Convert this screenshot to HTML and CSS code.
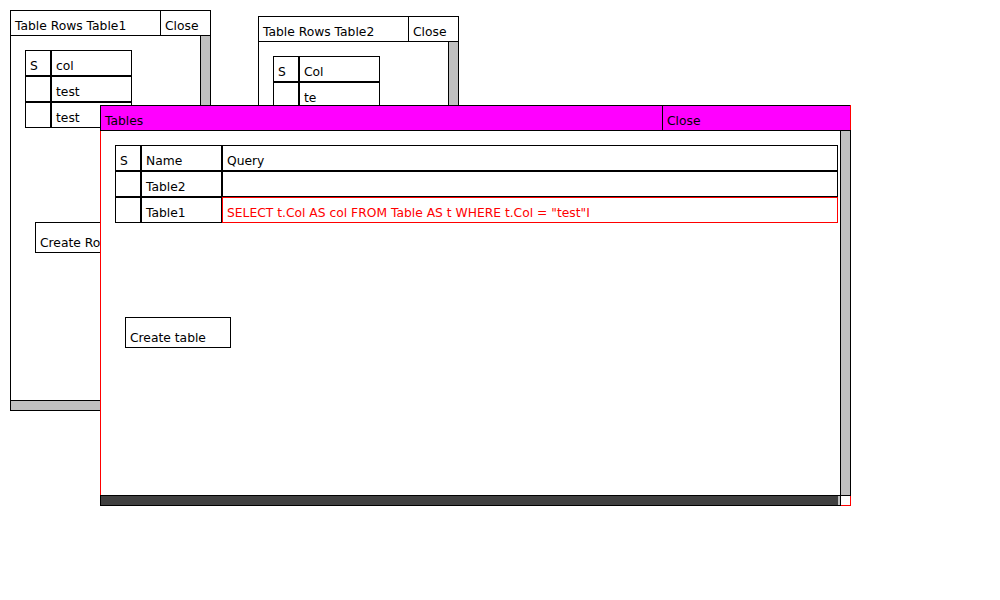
FILE: index.html
```html
<!DOCTYPE html>
<html>
<head>
<meta charset="utf-8">
<link rel="stylesheet" href="styles.css">
</head>
<body>
<div class="desktop">
  <div class="win win-narrow win-rows1">
    <div class="titlebar">
      <div class="title">Table Rows Table1</div>
      <div class="close">Close</div>
    </div>
    <div class="body">
      <div class="grid grid-rows">
        <div class="cell">S</div><div class="cell">col</div>
        <div class="cell"></div><div class="cell">test</div>
        <div class="cell"></div><div class="cell">test</div>
      </div>
      <div class="btn">Create Row</div>
    </div>
    <div class="vscroll"></div>
    <div class="hscroll"></div>
  </div>

  <div class="win win-narrow win-rows2">
    <div class="titlebar">
      <div class="title">Table Rows Table2</div>
      <div class="close">Close</div>
    </div>
    <div class="body">
      <div class="grid grid-rows">
        <div class="cell">S</div><div class="cell">Col</div>
        <div class="cell"></div><div class="cell">te</div>
      </div>
    </div>
    <div class="vscroll"></div>
    <div class="hscroll"></div>
  </div>

  <div class="win win-wide win-active win-tables">
    <div class="titlebar">
      <div class="title">Tables</div>
      <div class="close">Close</div>
    </div>
    <div class="body">
      <div class="grid grid-tables">
        <div class="cell">S</div><div class="cell">Name</div><div class="cell">Query</div>
        <div class="cell"></div><div class="cell">Table2</div><div class="cell"></div>
        <div class="cell"></div><div class="cell">Table1</div><div class="cell cell-edit">SELECT t.Col AS col FROM Table AS t WHERE t.Col = "test"I</div>
      </div>
      <div class="btn">Create table</div>
    </div>
    <div class="vscroll"></div>
    <div class="hscroll"><div class="thumb"></div></div>
  </div>
</div>
</body>
</html>
```

FILE: styles.css
```css
* { box-sizing: border-box; }

html, body {
  margin: 0;
  padding: 0;
  background: #ffffff;
}

body {
  font-family: "DejaVu Sans", "Liberation Sans", sans-serif;
  font-size: 12.3px;
  line-height: 14px;
  color: #000000;
}

.desktop {
  position: relative;
  width: 1000px;
  height: 600px;
  overflow: hidden;
}

.win {
  position: absolute;
  width: 201px;
  height: 401px;
  border: 1px solid #000000;
  background: #ffffff;
  display: flex;
  flex-direction: column;
}

.win-wide { width: 751px; }
.win-active { border-color: #ff0000; }

.win-rows1 { left: 10px; top: 10px; }
.win-rows2 { left: 258px; top: 16px; }
.win-tables { left: 100px; top: 105px; }

.titlebar {
  display: flex;
  height: 26px;
  margin: -1px 0 0 -1px;
  border: 1px solid #000000;
  border-right: none;
  flex-shrink: 0;
}

.win-narrow .titlebar { margin-right: -1px; border-right: 1px solid #000000; }
.win-active .titlebar { background: #ff00ff; }

.title {
  flex: 1;
  display: flex;
  align-items: flex-end;
  padding: 0 0 2px 4px;
  white-space: nowrap;
  overflow: hidden;
}

.close {
  display: flex;
  align-items: flex-end;
  padding: 0 0 2px 4px;
  border-left: 1px solid #000000;
  white-space: nowrap;
}

.win-narrow .close { width: 50px; }
.win-wide .close { width: 188px; }

.body {
  padding: 14px 0 0 14px;
  display: flex;
  flex-direction: column;
  align-items: flex-start;
}

.grid {
  display: grid;
  grid-auto-rows: 26px;
}

.grid-rows { grid-template-columns: 26px 81px; }
.grid-tables { grid-template-columns: 26px 81px 616px; }

.cell {
  border: 1px solid #000000;
  display: flex;
  align-items: flex-end;
  padding: 0 0 2px 4px;
  white-space: nowrap;
  overflow: hidden;
}

.cell-edit {
  border-color: #ff0000;
  color: #ff0000;
}

.btn {
  margin: 94px 0 0 10px;
  width: 106px;
  height: 31px;
  border: 1px solid #000000;
  display: flex;
  align-items: flex-end;
  padding: 0 0 2px 4px;
  white-space: nowrap;
  overflow: hidden;
}

.vscroll {
  position: absolute;
  top: 24px;
  bottom: 9px;
  right: -1px;
  width: 11px;
  border: 1px solid #000000;
  background: #c0c0c0;
}

.hscroll {
  position: absolute;
  left: -1px;
  right: 9px;
  bottom: -1px;
  height: 11px;
  border: 1px solid #000000;
  background: #c0c0c0;
}

.thumb {
  width: 737px;
  height: 100%;
  background: #404040;
}
```
